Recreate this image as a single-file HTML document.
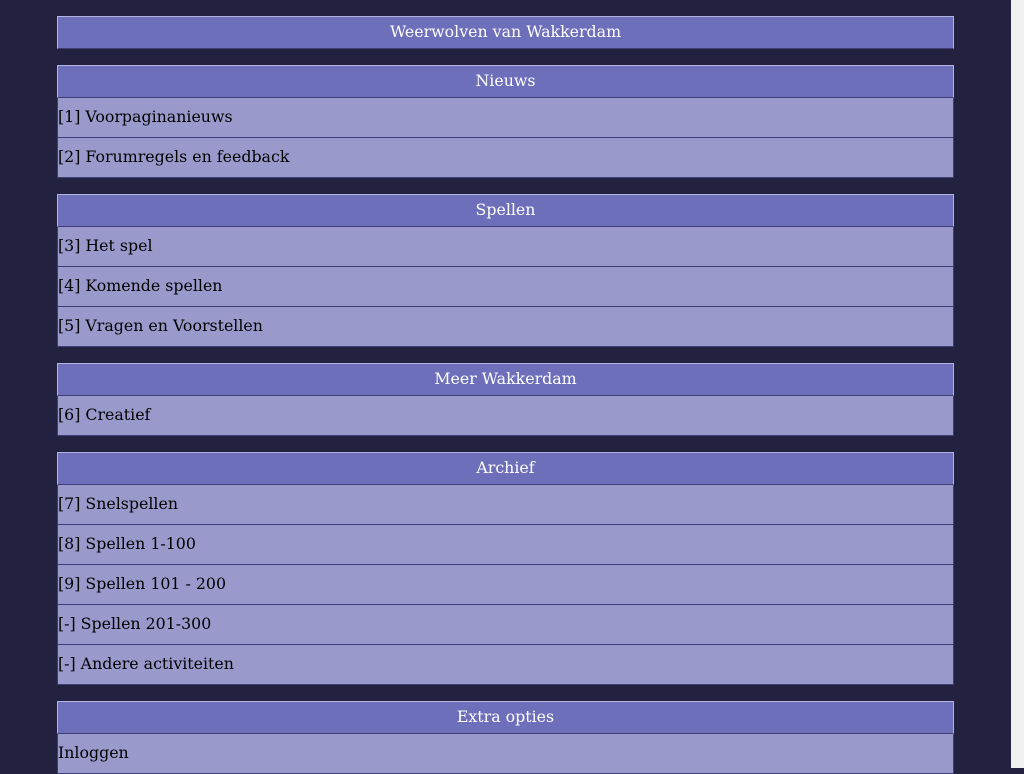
<!DOCTYPE html>
<html><head><meta charset="utf-8"><style>
html,body{margin:0;padding:0;width:1024px;height:768px;overflow:hidden;background:#22213f;font-family:"DejaVu Serif","Liberation Serif",serif;font-size:15.8px;}
.sb{position:absolute;left:1011px;top:0;width:13px;height:768px;background:#f0f0f0;}
.wrap{position:absolute;left:57px;top:16px;width:897px;}
.h{box-sizing:border-box;height:33px;background:#6e6fba;color:#fff;text-align:center;line-height:30px;border:1px solid #b4b4e0;border-bottom:1px solid #3e3d78;}
.r{box-sizing:border-box;height:40px;background:#9999cc;color:#000;line-height:38px;border:1px solid #3e3d78;border-top:none;padding-left:0;}
.g{height:16px;}
</style></head><body>
<div class="sb"></div>
<div class="wrap">
<div class="h">Weerwolven van Wakkerdam</div>
<div class="g"></div>
<div class="h">Nieuws</div>
<div class="r">[1] Voorpaginanieuws</div>
<div class="r">[2] Forumregels en feedback</div>
<div class="g"></div>
<div class="h">Spellen</div>
<div class="r">[3] Het spel</div>
<div class="r">[4] Komende spellen</div>
<div class="r">[5] Vragen en Voorstellen</div>
<div class="g"></div>
<div class="h">Meer Wakkerdam</div>
<div class="r">[6] Creatief</div>
<div class="g"></div>
<div class="h">Archief</div>
<div class="r">[7] Snelspellen</div>
<div class="r">[8] Spellen 1-100</div>
<div class="r">[9] Spellen 101 - 200</div>
<div class="r">[-] Spellen 201-300</div>
<div class="r">[-] Andere activiteiten</div>
<div class="g"></div>
<div class="h">Extra opties</div>
<div class="r">Inloggen</div>
</div>
</body></html>
